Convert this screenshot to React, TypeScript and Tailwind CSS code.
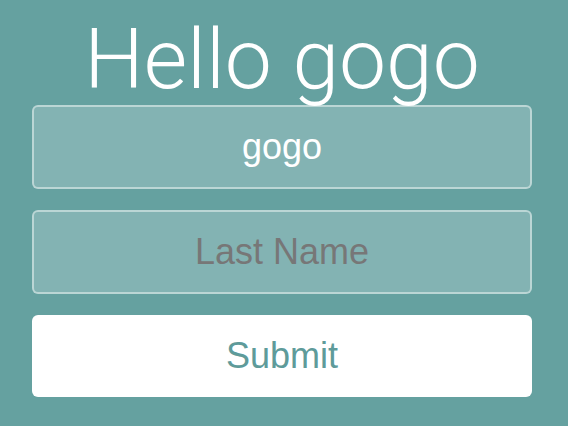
import React, { useState } from 'react';

const App: React.FC = () => {
  const [firstName, setFirstName] = useState('gogo');
  const [lastName, setLastName] = useState('');

  return (
    <div className="min-h-[426px] w-full bg-[#65a1a0] font-['Liberation_Sans',Arial,sans-serif]">
      <div className="ml-8 flex w-[500px] flex-col pt-[14px]">
        <h1 className="text-center font-['Roboto',sans-serif] text-[84px] font-light leading-[91px] text-white">
          Hello {firstName}
        </h1>
        <input
          value={firstName}
          onChange={e => setFirstName(e.target.value)}
          placeholder="First Name"
          className="h-[84px] rounded-[6px] border-2 border-white/45 bg-white/20 text-center text-[36px] text-white placeholder:text-[#777] outline-none"
        />
        <input
          value={lastName}
          onChange={e => setLastName(e.target.value)}
          placeholder="Last Name"
          className="mt-[21px] h-[84px] rounded-[6px] border-2 border-white/45 bg-white/20 text-center text-[36px] text-white placeholder:text-[#777] outline-none"
        />
        <button className="mt-[21px] h-[82px] rounded-[6px] bg-white text-[36px] text-[#5e9b9a]">
          Submit
        </button>
      </div>
    </div>
  );
};

export default App;
